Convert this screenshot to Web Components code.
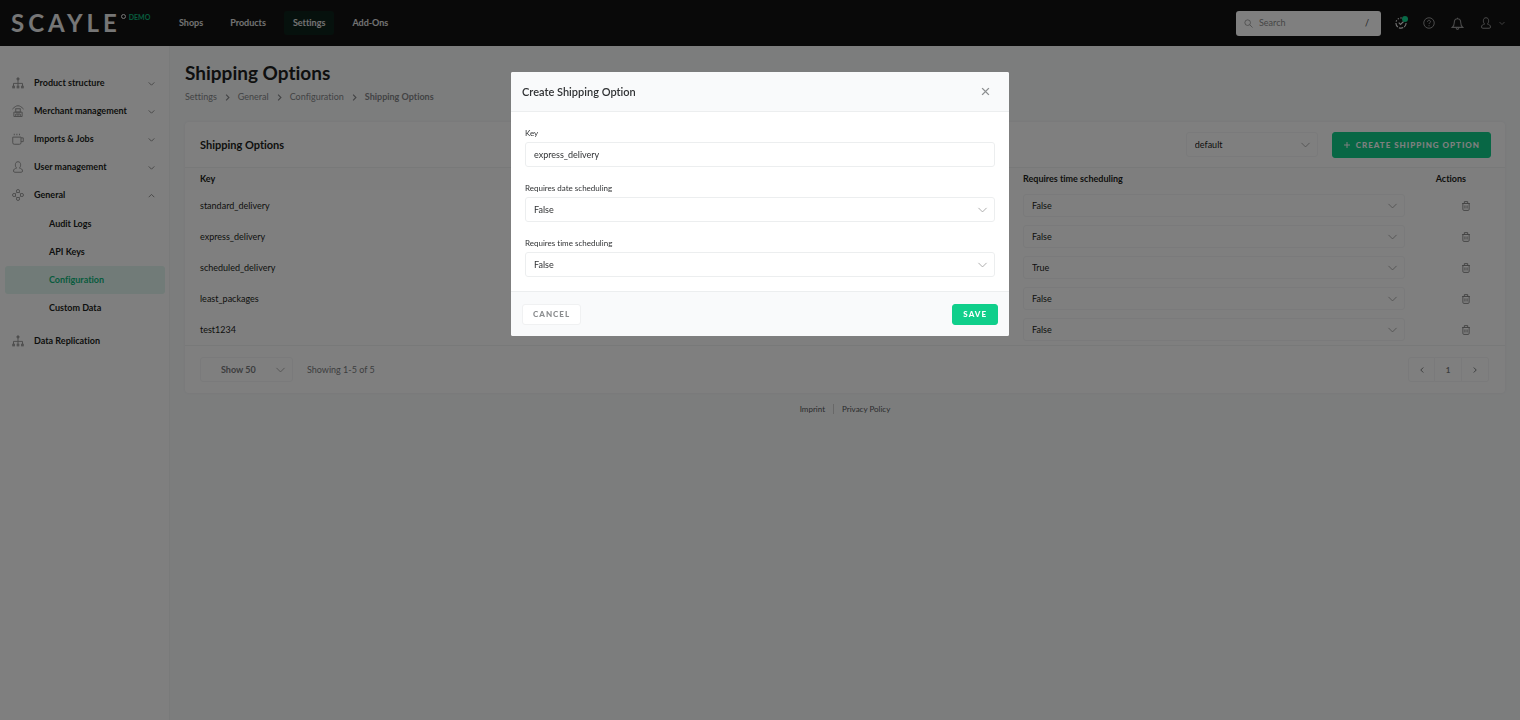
<!DOCTYPE html>
<html lang="en">
<head>
<meta charset="utf-8">
<meta name="viewport" content="width=device-width, initial-scale=1">
<title>Shipping Options</title>
<style>
  body {
    margin: 0;
    font-family: Lato, "Open Sans", sans-serif;
    font-size: 9px;
    line-height: 14px;
    font-variant-ligatures: none;
    color: #1c1e20;
    background: #f9fafb;
  }
  .layout {
    display: flex;
    min-height: calc(100vh - 46px);
  }
  main {
    flex: 1;
    min-width: 0;
    padding: 15px 15px 0;
  }
</style>
</head>
<body>
<app-header></app-header>
<div class="layout">
  <side-nav>
    <nav-item icon="tree" arrow="down">Product structure</nav-item>
    <nav-item icon="shop" arrow="down">Merchant management</nav-item>
    <nav-item icon="cup" arrow="down">Imports &amp; Jobs</nav-item>
    <nav-item icon="user" arrow="down">User management</nav-item>
    <nav-item icon="hub" arrow="up">General</nav-item>
    <nav-item slot="sub" sub>Audit Logs</nav-item>
    <nav-item slot="sub" sub>API Keys</nav-item>
    <nav-item slot="sub" sub active>Configuration</nav-item>
    <nav-item slot="sub" sub>Custom Data</nav-item>
    <nav-item slot="end" icon="tree">Data Replication</nav-item>
  </side-nav>
  <main>
    <page-title>Shipping Options</page-title>
    <options-card></options-card>
    <page-footer></page-footer>
  </main>
</div>
<modal-dialog heading="Create Shipping Option">
  <text-field label="Key" value="express_delivery"></text-field>
  <select-box label="Requires date scheduling" value="False" options="False,True"></select-box>
  <select-box label="Requires time scheduling" value="False" options="False,True"></select-box>
  <action-button slot="left" kind="plain">Cancel</action-button>
  <action-button slot="right">Save</action-button>
</modal-dialog>

<script>
const ICONS = {
  down: '<path d="M3 6l5 5 5-5"/>',
  up: '<path d="M3 11l5-5 5 5"/>',
  left: '<path d="M10.500 3l-5 5 5 5"/>',
  right: '<path d="M5.500 3l5 5-5 5"/>',
  close: '<path d="M2 2l12 12M14 2L2 14"/>',
  plus: '<path d="M8 2v12M2 8h12"/>',
  search: '<circle cx="6.500" cy="6.500" r="5"/><path d="M10.200 10.200l5 5"/>',
  tree: '<circle cx="8" cy="2.600" r="1.500" fill="currentColor"/><path d="M8 4v8M2 12V8.500h12V12"/><rect x="1" y="12.300" width="2.200" height="2.200"/><rect x="6.900" y="12.300" width="2.200" height="2.200"/><rect x="12.800" y="12.300" width="2.200" height="2.200"/>',
  shop: '<path d="M.5 5.500C3.500 2.500 5.500 1 8 1s4.500 1.500 7.500 4.500M2.500 9.500v5.800h11V9.500"/><rect x="5" y="5" width="6" height="4.500"/><path d="M2.500 9.500h11M5 15v-3h6v3M8 12v3"/>',
  cup: '<path d="M1 5.500h11V13a2 2 0 0 1-2 2H3a2 2 0 0 1-2-2zM12 6.500h3v5h-3M3 1v2M6.500 1v2M10 1v2"/>',
  user: '<path d="M6.200 9.300C5 8.600 4.500 7 4.500 5c0-2.600 1.300-4 3.500-4s3.500 1.400 3.500 4c0 2-.5 3.600-1.700 4.300"/><path d="M6.200 9.300C3.800 10 2 11 2 13.300c0 1.100.6 1.700 1.700 1.700h8.600c1.100 0 1.700-.6 1.700-1.700 0-2.300-1.800-3.300-4.200-4"/>',
  hub: '<circle cx="8" cy="2.800" r="2.100"/><circle cx="8" cy="13.200" r="2.100"/><circle cx="2.800" cy="8" r="2.100"/><circle cx="13.200" cy="8" r="2.100"/><path d="M4.500 6.300l1.900-1.900M9.600 4.400l1.900 1.900M4.500 9.700l1.900 1.900M9.600 11.600l1.900-1.900"/>',
  check: '<path d="M12.500 3A6.800 6.800 0 0 0 1.200 8" stroke-dasharray="2 1.800"/><path d="M1.200 8A6.800 6.800 0 0 0 14.800 8" stroke-dasharray="6 1.500"/><path d="M5 7.500l2.300 2.500L11.500 6"/>',
  help: '<circle cx="8" cy="8" r="7"/><path d="M6 6.500C6 5 7 4.400 8 4.400s2 .7 2 1.900C10 7.700 8 7.800 8 9.300M8 11v1.300"/>',
  bell: '<path d="M8 .8v1.400M8 2.200C5.300 2.200 4 4.300 4 7c0 3-.8 4.300-2.500 5.800h13C12.800 11.300 12 10 12 7c0-2.700-1.300-4.800-4-4.800zM6.300 13c0 3 3.400 3 3.400 0"/>',
  trash: '<path d="M1.800 4h12.400M5.300 4V1h5.400v3M3 4v9.500A1.600 1.600 0 0 0 4.600 15h6.800a1.600 1.600 0 0 0 1.600-1.500V4M6.300 7v5M9.700 7v5"/>'
};

function icon(name, size, width = 1.3) {
  return `<svg width="${size}" height="${size}" viewBox="0 0 16 16" fill="none" stroke="currentColor" stroke-width="${width}" aria-hidden="true">${ICONS[name]}</svg>`;
}

class BaseElement extends HTMLElement {
  constructor() {
    super();
    this.attachShadow({mode: 'open'});
  }

  connectedCallback() {
    const template = document.createElement('template');
    template.innerHTML = `<style>
      * { box-sizing: border-box; }
      svg { display: block; flex: none; }
      a { color: inherit; text-decoration: none; }
      button, input, select { font: inherit; font-variant-ligatures: none; color: inherit; margin: 0; }
    </style>` + this.getTemplate();
    this.shadowRoot.replaceChildren(template.content.cloneNode(true));
  }
}

class AppHeader extends BaseElement {
  getTemplate() {
    return `
      <style>
        :host {
          display: flex;
          align-items: center;
          height: 46px;
          padding: 0 14px 0 11px;
          box-sizing: border-box;
          background: #131313;
          color: #e4e4e4;
        }
        .brand { display: flex; width: 159px; }
        .name { font-size: 24px; line-height: 24px; font-weight: 700; letter-spacing: 4px; color: #ededed; }
        .ring { width: 5px; height: 5px; margin: 3px 3px 0 0; border: 1px solid #ededed; border-radius: 50%; }
        .demo { font-size: 7px; line-height: 12px; font-weight: 700; color: #0fb87c; }
        nav { display: flex; gap: 9px; flex: 1; }
        nav a { padding: 5px 9px; font-weight: 700; border-radius: 3px; }
        nav a.active { background: #0d231b; }
        .search {
          display: flex;
          align-items: center;
          gap: 6px;
          width: 145px;
          height: 25px;
          padding: 0 8px;
          border-radius: 3px;
          background: #fff;
          color: #888;
        }
        .search input { flex: 1; min-width: 0; padding: 0; border: 0; outline: 0; background: none; }
        .search input::placeholder { color: #8c8c8c; opacity: 1; }
        kbd { font: inherit; width: 12px; text-align: center; color: #444; }
        .tools { display: flex; align-items: center; gap: 16px; margin-left: 14px; color: #989898; }
        .tools button { display: flex; align-items: center; gap: 6px; padding: 0; border: 0; background: none; position: relative; }
        .tools .jobs { color: #e6e6e6; }
        .dot { position: absolute; top: -1px; right: -1px; width: 6px; height: 6px; border-radius: 50%; background: #10d48e; }
      </style>
      <a class="brand" href="#"><span class="name">SCAYLE</span><span class="ring"></span><span class="demo">DEMO</span></a>
      <nav>
        <a href="#">Shops</a>
        <a href="#">Products</a>
        <a href="#" class="active">Settings</a>
        <a href="#">Add-Ons</a>
      </nav>
      <label class="search">${icon('search', 9)}<input type="search" placeholder="Search" aria-label="Search"><kbd>/</kbd></label>
      <div class="tools">
        <button class="jobs" aria-label="Jobs">${icon('check', 12, 1.5)}<span class="dot"></span></button>
        <button aria-label="Help">${icon('help', 12)}</button>
        <button aria-label="Notifications">${icon('bell', 13)}</button>
        <button aria-label="Account">${icon('user', 12)}${icon('down', 8, 1.6)}</button>
      </div>
    `;
  }
}

class SideNav extends BaseElement {
  getTemplate() {
    return `
      <style>
        :host {
          display: block;
          flex: none;
          width: 170px;
          box-sizing: border-box;
          padding: 23px 4px 22px 5px;
          background: #fff;
          border-right: 1px solid #f3f4f5;
        }
        .sub { padding: 1px 0 5px; }
      </style>
      <nav aria-label="Settings">
        <slot></slot>
        <div class="sub"><slot name="sub"></slot></div>
        <slot name="end"></slot>
      </nav>
    `;
  }
}

class NavItem extends BaseElement {
  getTemplate() {
    const name = this.getAttribute('icon');
    const arrow = this.getAttribute('arrow');
    return `
      <style>
        :host { display: block; font-weight: 700; }
        a {
          display: flex;
          align-items: center;
          height: 28px;
          padding: 0 9px 0 7px;
          border-radius: 3px;
        }
        .icon { width: 22px; color: #999; }
        .text { flex: 1; }
        .arrow { color: #888; }
        :host([sub]) a { padding-left: 44px; }
        :host([active]) a { background: #e2f7f0; color: #10b67c; }
      </style>
      <a href="#">
        ${name ? `<span class="icon">${icon(name, 12)}</span>` : ''}
        <span class="text"><slot></slot></span>
        ${arrow ? `<span class="arrow">${icon(arrow, 9, 1.6)}</span>` : ''}
      </a>
    `;
  }
}

class PageTitle extends BaseElement {
  getTemplate() {
    return `
      <style>
        :host { display: block; margin-bottom: 18px; }
        h1 { margin: 0 0 5px; font-size: 19px; line-height: 24px; font-weight: 700; }
        nav { display: flex; align-items: center; gap: 6px; color: #858789; }
        .current { font-weight: 700; }
      </style>
      <h1><slot></slot></h1>
      <nav aria-label="Breadcrumb">
        <a href="#">Settings</a>${icon('right', 9, 2)}
        <a href="#">General</a>${icon('right', 9, 2)}
        <a href="#">Configuration</a>${icon('right', 9, 2)}
        <span class="current">Shipping Options</span>
      </nav>
    `;
  }
}

class SelectBox extends BaseElement {
  getTemplate() {
    const label = this.getAttribute('label');
    const value = this.getAttribute('value');
    const options = this.getAttribute('options').split(',');
    const hidden = this.hasAttribute('nolabel');
    return `
      <style>
        :host { display: block; }
        label { display: block; margin-bottom: 4px; font-size: 8px; line-height: 10px; }
        .box { display: grid; align-items: center; }
        .box > * { grid-area: 1 / 1; }
        select {
          appearance: none;
          width: 100%;
          height: var(--select-height, 25px);
          padding: 0 24px 0 var(--select-indent, 8px);
          border: 1px solid var(--field-border, #eceeef);
          border-radius: 3px;
          background: #fff;
          outline: 0;
        }
        svg { justify-self: end; margin-right: 6px; color: #a4a4a4; pointer-events: none; }
      </style>
      ${hidden ? '' : `<label for="field">${label}</label>`}
      <div class="box">
        <select id="field" aria-label="${label}">
          ${options.map(o => `<option${o === value ? ' selected' : ''}>${o}</option>`).join('')}
        </select>
        ${icon('down', 13, 1.1)}
      </div>
    `;
  }
}

class TextField extends BaseElement {
  getTemplate() {
    return `
      <style>
        :host { display: block; }
        label { display: block; margin-bottom: 4px; font-size: 8px; line-height: 10px; }
        input {
          display: block;
          width: 100%;
          height: 25px;
          padding: 0 8px;
          border: 1px solid #eceeef;
          border-radius: 3px;
          outline: 0;
        }
      </style>
      <label for="field">${this.getAttribute('label')}</label>
      <input id="field" type="text" value="${this.getAttribute('value')}">
    `;
  }
}

class ActionButton extends BaseElement {
  getTemplate() {
    const name = this.getAttribute('icon');
    return `
      <style>
        :host { display: block; }
        button {
          display: flex;
          align-items: center;
          gap: 5px;
          height: var(--button-height, 21px);
          padding: 0 10px;
          border: 1px solid #10cf8b;
          border-radius: 3px;
          background: #10cf8b;
          color: #fff;
          font-size: 8px;
          font-weight: 900;
          letter-spacing: 1px;
          text-transform: uppercase;
        }
        :host([kind="plain"]) button {
          border-color: #f0f1f2;
          background: #fff;
          color: #8b8d8f;
        }
      </style>
      <button type="button">${name ? icon(name, 8, 2) : ''}<slot></slot></button>
    `;
  }
}

class OptionsCard extends BaseElement {
  getTemplate() {
    const rows = [
      ['standard_delivery', 'False'],
      ['express_delivery', 'False'],
      ['scheduled_delivery', 'True'],
      ['least_packages', 'False'],
      ['test1234', 'False']
    ];
    return `
      <style>
        :host {
          display: block;
          background: #fff;
          border-radius: 4px;
          box-shadow: 0 0 3px #eaecee;
          --field-border: #f4f5f6;
        }
        header, footer { display: flex; align-items: center; height: 46px; padding: 0 14px 0 15px; }
        header { border-bottom: 1px solid #f1f2f3; }
        h2 { flex: 1; margin: 0; font-size: 11px; font-weight: 700; }
        .scope { width: 132px; margin-right: 14px; }
        header action-button { --button-height: 26px; }
        table { width: 100%; border-collapse: collapse; table-layout: fixed; }
        th, td { padding: 4px 15px; text-align: left; }
        th { height: 22px; padding-top: 0; padding-bottom: 0; font-weight: 700; background: #fcfcfd; }
        td { height: 31px; }
        td select-box { --select-height: 23px; }
        .time { width: 412px; }
        .actions { width: 85px; text-align: right; padding-right: 39px; }
        td.actions { padding-right: 34px; }
        td button { padding: 0; border: 0; background: none; color: #858585; vertical-align: middle; }
        footer { border-top: 1px solid #f1f2f3; height: 48px; color: #7a7c7e; }
        .size { width: 93px; margin-right: 14px; font-weight: 700; --select-indent: 20px; }
        .count { flex: 1; }
        .pages { display: flex; margin-right: 2px; }
        .pages button {
          display: flex;
          align-items: center;
          justify-content: center;
          width: 27px;
          height: 25px;
          padding: 0;
          border: 1px solid #f4f5f6;
          border-left-width: 0;
          background: #fff;
          font-size: 8px;
          font-weight: 700;
        }
        .pages button:first-child { border-left-width: 1px; border-radius: 3px 0 0 3px; }
        .pages button:last-child { border-radius: 0 3px 3px 0; }
      </style>
      <header>
        <h2>Shipping Options</h2>
        <select-box class="scope" nolabel label="Scope" value="default" options="default"></select-box>
        <action-button icon="plus">Create Shipping Option</action-button>
      </header>
      <table>
        <thead>
          <tr><th>Key</th><th class="time">Requires time scheduling</th><th class="actions">Actions</th></tr>
        </thead>
        <tbody>
          ${rows.map(([key, time]) => `
            <tr>
              <td>${key}</td>
              <td><select-box nolabel label="Requires time scheduling" value="${time}" options="False,True"></select-box></td>
              <td class="actions"><button type="button" aria-label="Delete ${key}">${icon('trash', 10, 1.5)}</button></td>
            </tr>`).join('')}
        </tbody>
      </table>
      <footer>
        <select-box class="size" nolabel label="Rows per page" value="Show 50" options="Show 50"></select-box>
        <span class="count">Showing 1-5 of 5</span>
        <div class="pages">
          <button type="button" aria-label="Previous page">${icon('left', 8, 2)}</button>
          <button type="button">1</button>
          <button type="button" aria-label="Next page">${icon('right', 8, 2)}</button>
        </div>
      </footer>
    `;
  }
}

class PageFooter extends BaseElement {
  getTemplate() {
    return `
      <style>
        :host {
          display: flex;
          justify-content: center;
          padding: 11px 0;
          font-size: 8px;
          line-height: 10px;
          color: #55585a;
        }
        a { padding: 0 8px; }
        a + a { border-left: 1px solid #d0d0d0; }
      </style>
      <a href="#">Imprint</a><a href="#">Privacy Policy</a>
    `;
  }
}

class ModalDialog extends BaseElement {
  getTemplate() {
    return `
      <style>
        :host {
          position: fixed;
          inset: 0;
          display: flex;
          justify-content: center;
          align-items: flex-start;
          padding-top: 72px;
          background: rgba(0, 0, 0, 0.5);
          color: #303234;
        }
        .dialog {
          width: 100%;
          max-width: 498px;
          border-radius: 2px;
          background: #fff;
          overflow: hidden;
        }
        header, footer {
          display: flex;
          align-items: center;
          justify-content: space-between;
          padding: 0 11px;
          background: #f9fafb;
        }
        header { height: 40px; border-bottom: 1px solid #eceeef; }
        footer { height: 45px; border-top: 1px solid #eceeef; }
        h2 { margin: 0; font-size: 11px; font-weight: 600; }
        header button { padding: 0; margin-right: 8px; border: 0; background: none; color: #8d8f91; }
        .body { display: grid; gap: 16px; padding: 16px 14px 14px; }
      </style>
      <div class="dialog" role="dialog" aria-modal="true" aria-labelledby="heading">
        <header>
          <h2 id="heading">${this.getAttribute('heading')}</h2>
          <button type="button" aria-label="Close">${icon('close', 9, 2.500)}</button>
        </header>
        <div class="body"><slot></slot></div>
        <footer><slot name="left"></slot><slot name="right"></slot></footer>
      </div>
    `;
  }
}

customElements.define('app-header', AppHeader);
customElements.define('side-nav', SideNav);
customElements.define('nav-item', NavItem);
customElements.define('page-title', PageTitle);
customElements.define('select-box', SelectBox);
customElements.define('text-field', TextField);
customElements.define('action-button', ActionButton);
customElements.define('options-card', OptionsCard);
customElements.define('page-footer', PageFooter);
customElements.define('modal-dialog', ModalDialog);
</script>
</body>
</html>
